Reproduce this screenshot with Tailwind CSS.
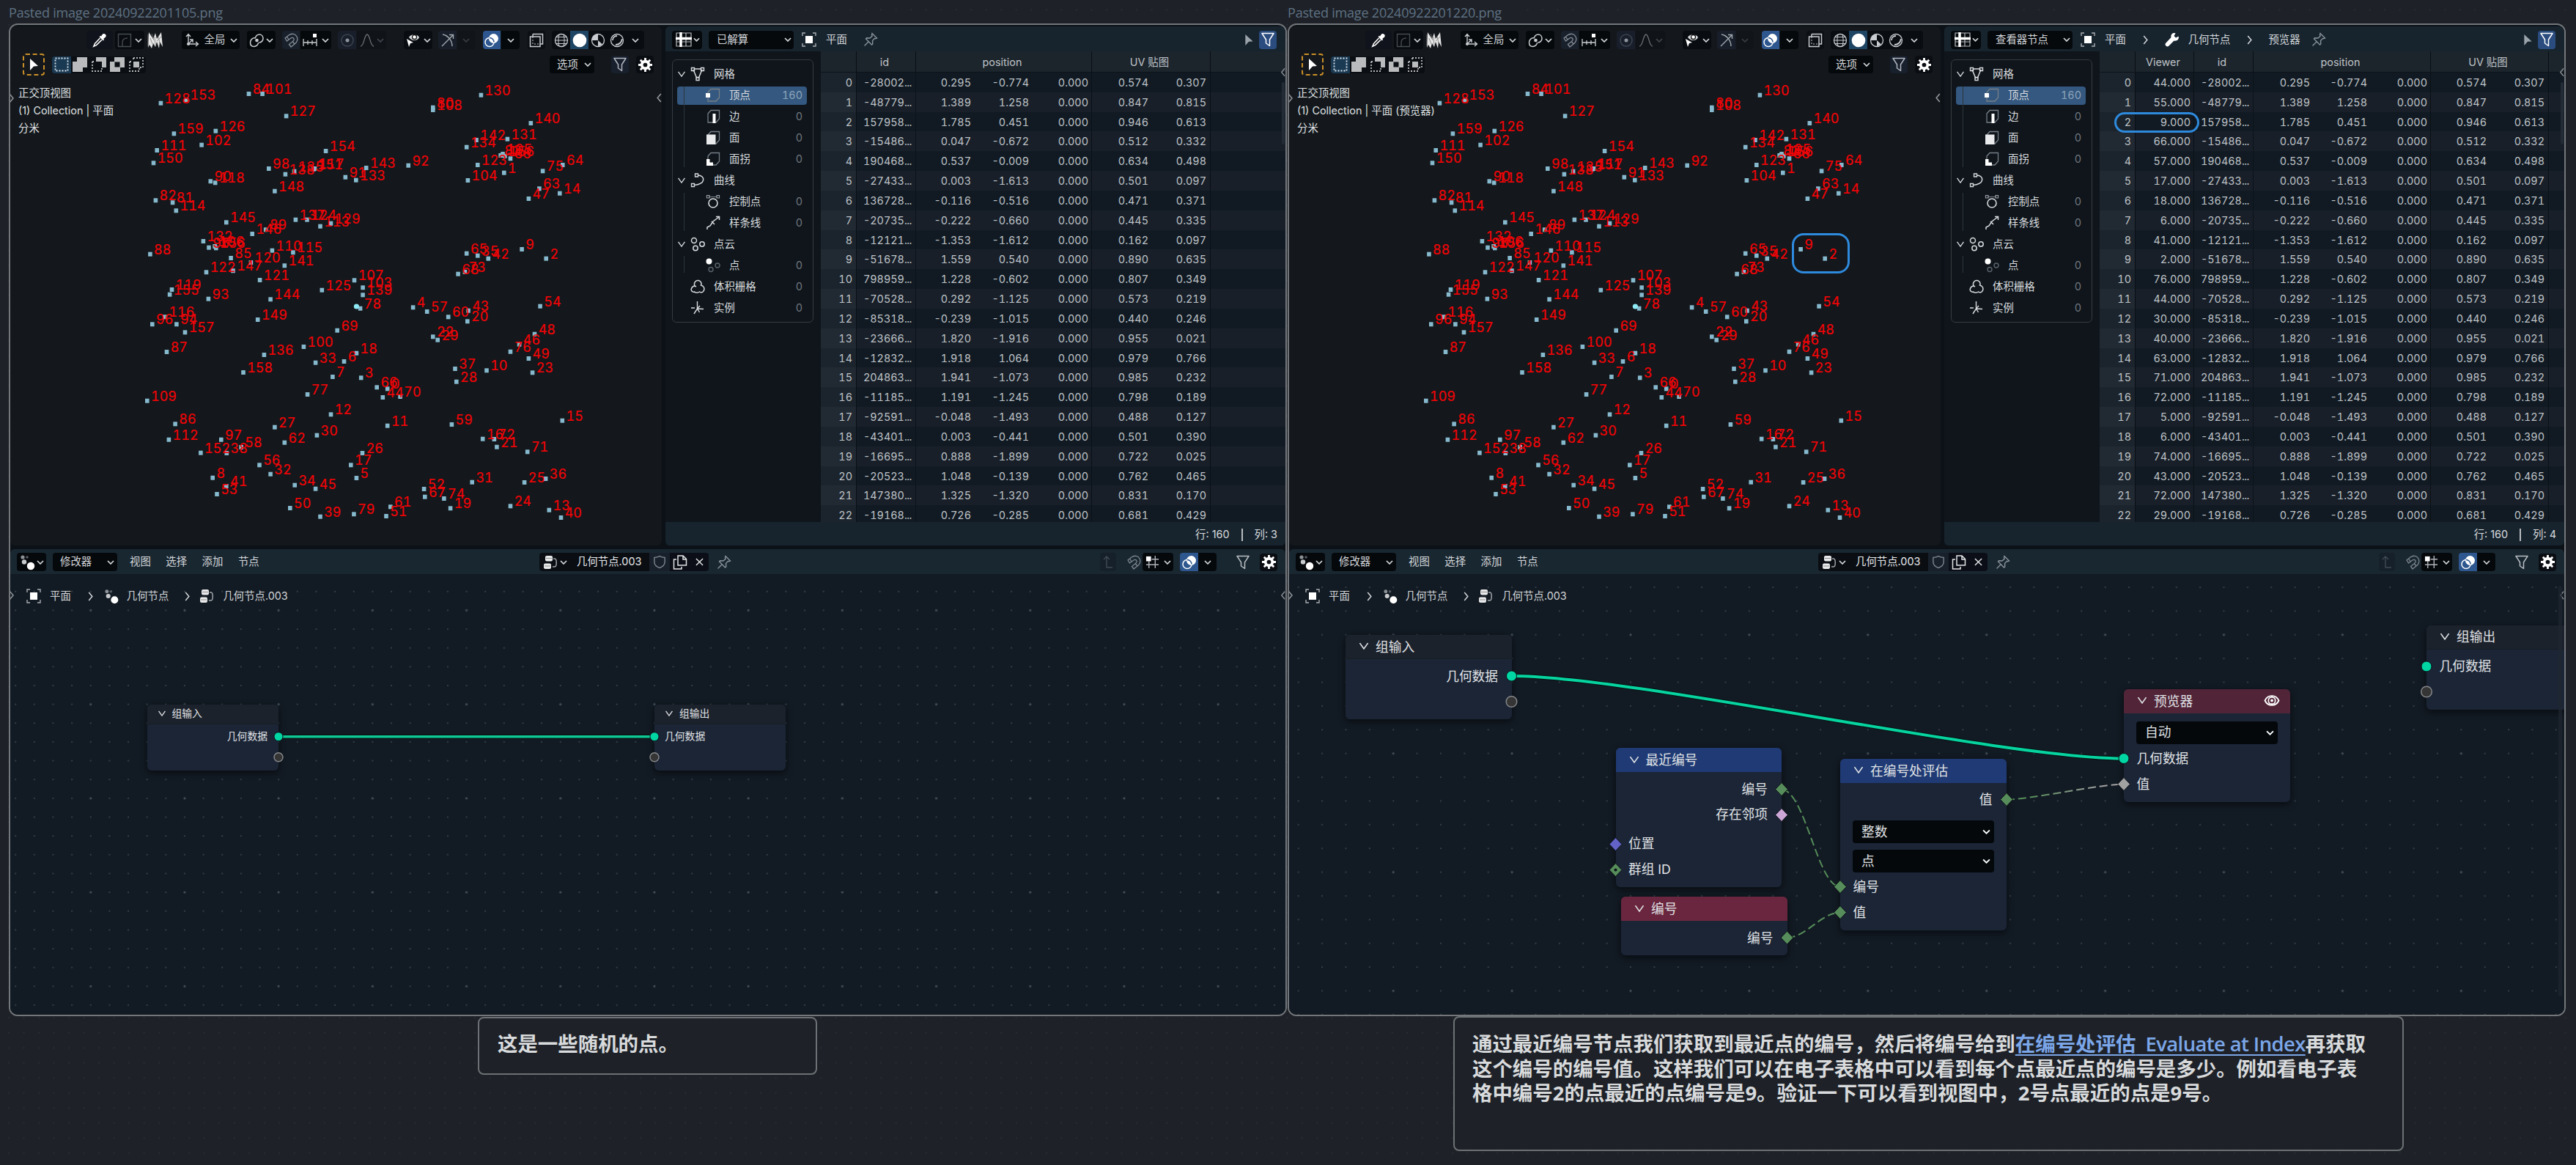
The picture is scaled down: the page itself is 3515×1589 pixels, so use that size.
<!DOCTYPE html>
<html lang="zh-CN">
<head>
<meta charset="utf-8">
<title>Canvas</title>
<script src="https://cdn.jsdelivr.net/npm/@tailwindcss/browser@4"></script>
</head>
<body class="bg-[#1e2228] w-[3515px] h-[1589px] overflow-hidden relative font-['Inter','Noto_Sans_CJK_SC',sans-serif] text-[14.4px] leading-none text-[#d4d7da] whitespace-nowrap">

<svg width="0" height="0" class="absolute">
  <defs>
    <symbol id="chev" viewBox="0 0 10 6"><path d="M1 1l4 4 4-4" fill="none" stroke="currentColor" stroke-width="1.7"/></symbol>
    <symbol id="vchev" viewBox="0 0 12 9"><path d="M1 1l5 7 5-7" fill="none" stroke="currentColor" stroke-width="1.5"/></symbol>
    <symbol id="right" viewBox="0 0 8 14"><path d="M1 1l5 6-5 6" fill="none" stroke="currentColor" stroke-width="1.6"/></symbol>
    <symbol id="left" viewBox="0 0 8 14"><path d="M7 1L2 7l5 6" fill="none" stroke="currentColor" stroke-width="1.6"/></symbol>
    <symbol id="dropper" viewBox="0 0 20 20"><path d="M18 2c-1.500-1.500-3.500-1-4.500.2L12 4.500l-1-.8-1.500 1.500 5.200 5.200 1.500-1.500-1-1 2.300-1.800c1.500-1.200 1.700-2.800.5-4.100z" fill="currentColor"/><path d="M10.500 7L3.500 14.500 1.800 18.300l3.700-1.700 7.300-7.200" fill="none" stroke="currentColor" stroke-width="1.500"/></symbol>
    <symbol id="curvebox" viewBox="0 0 20 20"><path d="M1.500 1.500h17v17h-17z M7 18v-5c0-4 2-6 7-6" fill="none" stroke="currentColor" stroke-width="1.400"/></symbol>
    <symbol id="hair" viewBox="0 0 22 22"><path d="M2 0l6 9 3-8 2 8 6-9 2 20-4-7-1 9-3-9-2 7-3-5-2 7-3-5-2 4z" fill="currentColor"/><path d="M1 3v16M4 8l3 8M10 6l1 12M15 5l2 10M19 6l-6 6M6 2l3 9" stroke="#777" stroke-width=".8"/></symbol>
    <symbol id="axes" viewBox="0 0 20 20"><path d="M5 2v13h13M2 5l3-3.500L8 5M15 12l3.500 3-3.500 3M5 15l6-6M11 13V9H7" fill="none" stroke="currentColor" stroke-width="1.400"/><circle cx="5" cy="15" r="2" fill="currentColor"/></symbol>
    <symbol id="pivot" viewBox="0 0 20 20"><path d="M8 7.500C9 4 11 2 14 2c3 0 5 2.500 5 5.500S16.500 13 13.500 13M9 6.500C5 6 1.500 9 1.500 13s2 5.500 5 5.500 6-2.500 6-5.500" fill="none" stroke="currentColor" stroke-width="1.500"/><circle cx="10.500" cy="10" r="2.300" fill="currentColor"/></symbol>
    <symbol id="magnet" viewBox="0 0 20 20"><path d="M2 7l5-4c4-3 9-2 11 2s0 8-3 10l-5 4-2.500-3.500 5-4c2-1.500 2-3 1.200-4.200S11.500 6 9.500 7.200L4.500 11z M4.500 5l2.500 4M12.500 12l2.500 3" fill="none" stroke="currentColor" stroke-width="1.300"/></symbol>
    <symbol id="snapinc" viewBox="0 0 20 20"><path d="M1 8v10M1 13h18M19 8v10M7 10v6M13 10v6" fill="none" stroke="currentColor" stroke-width="1.300"/><path d="M14 1h5v5h-5z" fill="#fff"/></symbol>
    <symbol id="propedit" viewBox="0 0 20 20"><circle cx="10" cy="10" r="8" fill="none" stroke="#3b444f" stroke-width="1.500"/><circle cx="10" cy="10" r="2.500" fill="#8d949c"/></symbol>
    <symbol id="falloff" viewBox="0 0 20 20"><path d="M1 18c5 0 5-16 9-16s4 16 9 16" fill="none" stroke="currentColor" stroke-width="1.300"/></symbol>
    <symbol id="viseye" viewBox="0 0 20 20"><path d="M2 8l9 5-4 1-2 5z" fill="currentColor"/><path d="M5 6c2-5 12-5 14 0-2 5-9 5-12 2z" fill="#d7dadd"/><circle cx="12.500" cy="5.500" r="3" fill="#fff" stroke="#111" stroke-width="1.300"/></symbol>
    <symbol id="gizmo" viewBox="0 0 20 20"><path d="M3 2c7 1 13 8 13 16M2 18L17 3M12 2.500h5.500V8" fill="none" stroke="currentColor" stroke-width="1.400"/></symbol>
    <symbol id="overlay" viewBox="0 0 20 20"><circle cx="12.500" cy="7.500" r="6.500" fill="#fff"/><circle cx="7" cy="12.500" r="6" fill="none" stroke="#fff" stroke-width="1.500"/><path d="M7 6.500a6 6 0 0 1 6 6" fill="none" stroke="#2d578e" stroke-width="1.500"/></symbol>
    <symbol id="xray" viewBox="0 0 20 20"><path d="M5 1.500h13.500V15H15M1.500 5H15v13.500H1.500zM5 5V1.500" fill="none" stroke="currentColor" stroke-width="1.500"/><path d="M5 5v10h10" fill="none" stroke="currentColor" stroke-dasharray="2 2"/></symbol>
    <symbol id="wire" viewBox="0 0 20 20"><circle cx="10" cy="10" r="8.500" fill="none" stroke="currentColor" stroke-width="1.300"/><path d="M1.500 10h17M7 2c-1.500 5-1.500 11 0 16M13 2c1.500 5 1.500 11 0 16M3 5.500h14M3 14.500h14" fill="none" stroke="currentColor" stroke-width="1"/></symbol>
    <symbol id="solid" viewBox="0 0 20 20"><circle cx="10" cy="10" r="9.300" fill="#fff"/></symbol>
    <symbol id="material" viewBox="0 0 20 20"><circle cx="10" cy="10" r="8.500" fill="none" stroke="currentColor" stroke-width="1.300"/><path d="M10 1.500a8.500 8.500 0 0 0-8.500 8.500H10zM10 10v8.500l6-3z" fill="currentColor"/></symbol>
    <symbol id="rendered" viewBox="0 0 20 20"><circle cx="10" cy="10" r="8.500" fill="none" stroke="currentColor" stroke-width="1.300"/><path d="M4 10c0-3 2-6 6-6M17 8c-1 5-4 8-9 8" fill="none" stroke="currentColor" stroke-width="1.800"/></symbol>
    <symbol id="funnel" viewBox="0 0 20 20"><path d="M2 1.500h16L12.500 10v8.500L7.500 15v-5z" fill="none" stroke="currentColor" stroke-width="1.500" stroke-linejoin="round"/></symbol>
    <symbol id="gear" viewBox="0 0 20 20"><g fill="#fff"><path d="M8.500 0h3v20h-3zM0 8.500h20v3H0z"/><path d="M8.500 0h3v20h-3zM0 8.500h20v3H0z" transform="rotate(45 10 10)"/><circle cx="10" cy="10" r="7"/></g><circle cx="10" cy="10" r="3" fill="#0a0d11"/></symbol>
    <symbol id="cursor" viewBox="0 0 12 16"><path d="M1 0l11 10-6 .5L1 16z" fill="currentColor"/></symbol>
    <symbol id="sel0" viewBox="0 0 20 20"><path d="M1.500 1.500h17v17h-17z" fill="none" stroke="#dfe8ee" stroke-width="1.800" stroke-dasharray="2 2"/></symbol>
    <symbol id="sel1" viewBox="0 0 20 20"><path d="M6 0h14v14h-6v6H0V6h6z" fill="#b9bbbd"/></symbol>
    <symbol id="sel2" viewBox="0 0 20 20"><path d="M6 0h14v14h-6V6H6z" fill="#b9bbbd"/><path d="M1 6v13h13v-4M1 6h4" fill="none" stroke="#b9bbbd" stroke-width="1.800" stroke-dasharray="2 2"/></symbol>
    <symbol id="sel3" viewBox="0 0 20 20"><path d="M6 0h14v14h-6v6H0V6h6zM6.500 6.500v7h7v-7z" fill="#b9bbbd" fill-rule="evenodd"/></symbol>
    <symbol id="sel4" viewBox="0 0 20 20"><path d="M6 6h8v8H6z" fill="#b9bbbd"/><path d="M6 1h13v13h-4M1 6v13h13v-4M1 6h4M6 1v4" fill="none" stroke="#b9bbbd" stroke-width="1.800" stroke-dasharray="2 2"/></symbol>
    <symbol id="sheet" viewBox="0 0 22 20"><path d="M1 1h20v18H1zM1 13h20M14 1v18" fill="none" stroke="#b8bcc0" stroke-width="1.200"/><path d="M7 0v20M0 8.500h22" stroke="#fff" stroke-width="3.500"/></symbol>
    <symbol id="object" viewBox="0 0 20 20"><path d="M5 5h10v10H5z" fill="#fff"/><path d="M5 1H1v4M15 1h4v4M5 19H1v-4M15 19h4v-4" fill="none" stroke="#a9adb1" stroke-width="1.400"/></symbol>
    <symbol id="pin" viewBox="0 0 20 20"><path d="M12 1.500l6.500 6.500-2 .8-1-.5-3 3.200.3 4.500-1.300 1L3.500 9l1-1.300 4.500.3 3.200-3-.7-1.500zM7.500 12.500L1.500 18.500" fill="none" stroke="currentColor" stroke-width="1.400"/></symbol>
    <symbol id="wrench" viewBox="0 0 20 20"><path d="M18.500 5.500l-3.500 2-2.500-2.500 2-3.500C11 0 7.500 3 8.500 7L1.500 14.500a2.600 2.600 0 1 0 4 4L12.500 11.500c4 1 7.500-2 6-6z" fill="#fff"/></symbol>
    <symbol id="geonodes" viewBox="0 0 22 22"><circle cx="4" cy="4" r="2.600" fill="#8d9297"/><circle cx="10" cy="4" r="1.800" fill="#565d64"/><circle cx="6" cy="10.500" r="3.200" fill="#c9cccf"/><circle cx="15" cy="16" r="5.200" fill="#fff"/></symbol>
    <symbol id="nodetree" viewBox="0 0 20 20"><rect x="3" y="1" width="10" height="7.500" rx="2" fill="#e8e9ea"/><rect x="1" y="11.500" width="10" height="7.500" rx="2" fill="#e8e9ea"/><path d="M4 4.500h8M2 15h8" stroke="#777" stroke-width=".8"/><path d="M14 5h2c3 0 3 11 0 11h-3" fill="none" stroke="#a3a8ac" stroke-width="1.500"/></symbol>
    <symbol id="shield" viewBox="0 0 18 20"><path d="M9 1.500C7 3 4 3.500 1.500 3.500V10c0 4 3.500 7 7.500 8.500 4-1.500 7.500-4.500 7.500-8.500V3.500C14 3.500 11 3 9 1.500z" fill="none" stroke="currentColor" stroke-width="1.400"/></symbol>
    <symbol id="copy" viewBox="0 0 20 20"><path d="M7 1h7l4.500 4.500V14H7zM14 1v5h4.500M5 6H1.500v13H12v-3" fill="none" stroke="#e3e5e7" stroke-width="1.500"/></symbol>
    <symbol id="x" viewBox="0 0 12 12"><path d="M1 1l10 10M11 1L1 11" stroke="#e3e5e7" stroke-width="1.500"/></symbol>
    <symbol id="up" viewBox="0 0 14 18"><path d="M1 5l4-4 4 4M5 1v15h8" fill="none" stroke="currentColor" stroke-width="1.400"/></symbol>
    <symbol id="snapgrid" viewBox="0 0 20 20"><path d="M5 9v10M14 1v18M9 6h10M1 14h18" fill="none" stroke="#aeb2b6" stroke-width="1.500"/><path d="M1 2h7v7H1z" fill="#fff"/></symbol>
    <symbol id="mesh" viewBox="0 0 20 20"><path d="M4 4l5 12M16 4l-5 12M5 3h10" fill="none" stroke="currentColor" stroke-width="1.500"/><path d="M1.500 1.500h4v4h-4zM14.500 1.500h4v4h-4zM8 14.500h4v4H8z" fill="none" stroke="currentColor" stroke-width="1.400"/></symbol>
    <symbol id="cube" viewBox="0 0 20 20"><path d="M3 6l4-4.500h11.500V13L14 18H3z" fill="none" stroke="#777f87" stroke-width="1.300"/></symbol>
    <symbol id="vert" viewBox="0 0 20 20"><use href="#cube"/><path d="M0 7h6v6H0z" fill="#fff"/></symbol>
    <symbol id="edge" viewBox="0 0 20 20"><use href="#cube"/><path d="M9.500 6h4v13h-4z" fill="#fff"/></symbol>
    <symbol id="face" viewBox="0 0 20 20"><use href="#cube"/><path d="M1 5.500h12.500V19H1z" fill="#e8eaeb"/></symbol>
    <symbol id="corner" viewBox="0 0 20 20"><use href="#cube"/><path d="M1 10h4.500v4.500H10V19H1z" fill="#fff"/></symbol>
    <symbol id="curve" viewBox="0 0 20 20"><path d="M10 3c11 0 11 13-5 13.500" fill="none" stroke="currentColor" stroke-width="1.500"/><path d="M6.500 1h4v4h-4zM1.500 14.500h4v4h-4z" fill="none" stroke="currentColor" stroke-width="1.300"/></symbol>
    <symbol id="cpoint" viewBox="0 0 20 20"><circle cx="10" cy="12" r="6" fill="none" stroke="currentColor" stroke-width="1.600"/><path d="M4 3.500h12" stroke="#777f87"/><path d="M1.500 1.500h3.500v3.500H1.500zM15 1.500h3.500v3.500H15z" fill="none" stroke="#9ba1a6" stroke-width="1.200"/></symbol>
    <symbol id="spline" viewBox="0 0 20 20"><path d="M2 19v-3l4-2 4-6 8-6M14 1.500h4.500V6M8 8l4 4" fill="none" stroke="currentColor" stroke-width="1.500"/></symbol>
    <symbol id="cloud3" viewBox="0 0 20 20"><g fill="none" stroke="currentColor" stroke-width="1.500"><circle cx="5" cy="5" r="3.500"/><circle cx="7" cy="15.500" r="3.200"/><circle cx="16" cy="10" r="3.200"/></g></symbol>
    <symbol id="pt" viewBox="0 0 20 20"><circle cx="4.500" cy="4.500" r="4" fill="#fff"/><g fill="none" stroke="#5b636b" stroke-width="1.400"><circle cx="7" cy="15.500" r="3"/><circle cx="16" cy="10" r="3"/></g></symbol>
    <symbol id="volume" viewBox="0 0 20 20"><path d="M6 9C4 4 8 1 11 1.500S16 5 14.500 8c4 1 5 4 4 7s-4 3.500-6 2c-3 2-6 1-7 0-3 1-5-2-4-4.500S5 9 6 9zM6 9l2 1" fill="none" stroke="currentColor" stroke-width="1.500"/></symbol>
    <symbol id="inst" viewBox="0 0 20 20"><path d="M9.500 1v10l8.500.5M9.500 11L5 18M1 10h5M13 7l-3.500 4 3 5" fill="none" stroke="currentColor" stroke-width="1.400"/></symbol>
    <symbol id="eye" viewBox="0 0 22 18"><path d="M1 9c4-9 16-9 20 0-4 9-16 9-20 0z" fill="none" stroke="#fff" stroke-width="2"/><circle cx="11" cy="9" r="5" fill="none" stroke="#fff" stroke-width="1.800"/><circle cx="11" cy="9" r="2" fill="#fff"/></symbol>
    <pattern id="pagegrid" x="7" y="3" width="20.520" height="20.520" patternUnits="userSpaceOnUse"><circle cx="5" cy="10.300" r=".9" fill="#2b3137"/></pattern>
  </defs>
</svg>

<svg class="absolute inset-0" width="3515" height="1589"><rect width="3515" height="1589" fill="url(#pagegrid)"/></svg>

<main class="relative flex flex-col w-[3515px] pl-3">
  <div class="flex h-8 pt-[5px] font-['Open_Sans','Noto_Sans',sans-serif] text-[18px] tracking-[-0.2px] leading-[24px] text-[#5f7183] gap-px">
    <div class="w-[1744px]"><span class="inline-block bg-[#1e2228] pr-4">Pasted image 20240922201105.png</span></div>
    <div class="w-[1744px]"><span class="inline-block bg-[#1e2228] pr-4">Pasted image 20240922201220.png</span></div>
  </div>
  <div id="panels" class="flex gap-px"></div>
  <div class="flex items-start font-['Open_Sans','Noto_Sans_CJK_SC',sans-serif] font-bold text-[27.450px] leading-[33.600px] text-[#d8dadc]">
    <div class="mt-px ml-[640px] w-[463px] h-[79px] rounded-lg border-2 border-[#6c7175] bg-[#1e2228] pl-[25px] pt-[18px]">这是一些随机的点。</div>
    <div class="ml-[868px] w-[1297px] h-[184px] rounded-lg border-2 border-[#6c7175] bg-[#1e2228] pl-[24px] pt-[19px]">
      <p>通过最近编号节点我们获取到最近点的编号，然后将编号给到<span class="text-[#7ba6e8] underline decoration-2 underline-offset-4">在编号处评估<span class="whitespace-pre font-semibold tracking-[-0.6px]">  Evaluate at Index</span></span>再获取</p>
      <p>这个编号的编号值。这样我们可以在电子表格中可以看到每个点最近点的编号是多少。例如看电子表</p>
      <p>格中编号2的点最近的点编号是9。验证一下可以看到视图中，2号点最近的点是9号。</p>
    </div>
  </div>
</main>

<script>
const ic = (id, cls) => `<svg class="${cls || 'size-5 shrink-0'}"><use href="#${id}"/></svg>`;
const chev = (cls) => ic('chev', cls || 'w-[10px] h-[6px] shrink-0 text-[#d4d7da]');

/* Vertex labels: [number, x, y] in viewport space */
const upper = [[128,378,422],[153,438,409],[84,585,384],[101,617,384],[130,1131,389],[80,1018,440],[108,1018,450],[127,673,475],[140,1248,504],[159,409,547],[126,507,536],[102,474,593],[111,369,615],[150,361,667],[154,766,618],[142,1120,573],[131,1193,569],[134,1097,602],[83,1177,636],[105,1182,630],[156,1187,638],[66,1200,649],[123,1123,675],[1,1185,707],[104,1100,738],[64,1323,675],[75,1276,700],[63,1268,772],[14,1316,791],[47,1243,813],[98,632,690],[138,671,713],[135,692,701],[151,737,692],[117,740,690],[143,861,687],[92,960,677],[91,812,725],[133,837,737],[90,495,742],[118,506,748],[148,646,782],[82,366,820],[81,406,829],[114,414,862],[145,532,910],[137,695,899],[124,722,899],[113,753,926],[129,778,914],[89,625,940],[146,593,957],[132,478,987],[95,491,1013],[106,505,1008],[156,508,1015],[88,353,1040],[85,543,1056],[110,640,1025],[115,689,1033],[120,590,1074],[141,669,1087],[122,485,1114],[147,548,1108],[121,611,1146],[107,833,1147],[125,757,1187],[65,1097,1037],[35,1123,1046],[42,1148,1058],[9,1227,1020],[2,1284,1058],[68,1077,1121],[73,1093,1113],[103,853,1177],[119,404,1185]];
const lower = [[155,399,65],[139,853,67],[78,847,122],[93,490,83],[144,636,85],[4,971,118],[57,1004,135],[60,1054,157],[43,1101,131],[20,1099,175],[54,1270,113],[116,388,157],[96,358,187],[94,415,187],[157,435,220],[149,606,168],[69,793,212],[48,1257,227],[22,1018,238],[29,1029,251],[46,1221,269],[76,1200,299],[100,714,279],[18,838,305],[87,392,300],[136,621,312],[33,742,344],[6,809,339],[49,1243,327],[158,572,384],[7,782,402],[3,849,406],[37,1070,369],[10,1144,376],[28,1073,422],[23,1252,385],[66,886,445],[0,911,451],[44,900,486],[70,941,483],[77,723,474],[109,346,500],[12,778,556],[15,1322,581],[86,412,595],[27,646,608],[11,911,602],[59,1062,597],[112,397,659],[97,520,659],[30,745,641],[62,669,671],[16,1135,656],[72,1162,657],[152,472,713],[38,533,714],[58,567,690],[26,852,714],[21,1168,689],[71,1240,709],[17,825,763],[56,610,763],[32,636,800],[8,500,815],[5,838,816],[31,1110,833],[25,1233,834],[36,1283,819],[41,532,849],[53,510,882],[34,693,845],[45,742,860],[52,997,861],[67,999,893],[74,1044,900],[50,682,939],[19,1059,940],[24,1200,931],[61,918,934],[13,1291,947],[39,753,974],[79,832,964],[51,908,972],[40,1319,978]];
const pts = upper.map(([n, x, y]) => [n, x / 1.723, y / 3]).concat(lower.map(([n, x, y]) => [n, x / 1.723, 380 + y / 3]));
const points = () => `<svg class="absolute inset-0" width="889" height="708" viewBox="14 36 889 708">
  <g fill="#86b9cd">${pts.map(([n, x, y]) => `<rect x="${(x - 2.8).toFixed(1)}" y="${(y - 3).toFixed(1)}" width="5.600" height="6"/>`).join('')}</g>
  <circle cx="486.400" cy="418" r="3.600" fill="#8deaf5"/>
  <g class="tabular-nums text-[18px]" fill="#f20407" stroke="#f20407" stroke-width=".2">${pts.map(([n, x, y]) => `<text x="${(x + 5.2).toFixed(1)}" y="${(y - .2).toFixed(1)}">${n}</text>`).join('')}</g></svg>`;

const viewport = (p) => `<section class="relative w-[889px] h-[708px] bg-[#14171b] rounded-md overflow-hidden">
  ${points()}
  <div class="relative flex items-center pt-[6px] h-[31px] pl-[104px] text-[#c9cdd1]">
    <div class="w-9 h-[25px] rounded bg-[#10131b] flex items-center justify-center text-white">${ic('dropper', 'size-5')}</div>
    <div class="ml-[3px] w-10 h-[25px] rounded bg-[#090c10] flex items-center justify-between pl-[3px] pr-[3px] text-[#454b52]">${ic('curvebox')}${chev()}</div>
    <div class="ml-1 w-[22px] h-[22px] text-[#e6e6e6]">${ic('hair', 'size-[22px]')}</div>
    <div class="ml-[25px] w-[79px] h-[25px] rounded bg-[#06090c] flex items-center justify-between pl-1 pr-[3px]">${ic('axes')}<span>全局</span>${chev()}</div>
    <div class="ml-[10px] w-[39px] h-[25px] rounded bg-[#06090c] flex items-center justify-between pl-[3px] pr-[3px]">${ic('pivot')}${chev()}</div>
    <div class="ml-[9px] w-6 h-[25px] rounded-l bg-[#18202c] flex items-center justify-center text-[#868d95]">${ic('magnet')}</div>
    <div class="ml-px w-[42px] h-[25px] rounded-r bg-[#06090c] flex items-center justify-between pl-[3px] pr-[3px]">${ic('snapinc')}${chev()}</div>
    <div class="ml-[9px] w-[25px] h-[25px] rounded-l bg-[#181f2b] flex items-center justify-center">${ic('propedit')}</div>
    <div class="ml-px w-10 h-[25px] rounded-r bg-[#101318] flex items-center justify-between pl-1 pr-[3px] text-[#6c7279]">${ic('falloff')}${chev('w-[10px] h-[6px] text-[#42484f]')}</div>
    <div class="ml-6 w-[39px] h-[25px] rounded bg-[#090c10] flex items-center justify-between pl-[2px] pr-[2px] text-white">${ic('viseye')}${chev()}</div>
    <div class="ml-2 w-[25px] h-[25px] rounded-l bg-[#181f2b] flex items-center justify-center text-[#a4aab0]">${ic('gizmo')}</div>
    <div class="ml-px w-6 h-[25px] rounded-r bg-[#111419] flex items-center justify-center">${chev('w-[10px] h-[6px] text-[#383e45]')}</div>
    <div class="ml-[11px] w-6 h-[25px] rounded-l bg-[#2d578e] flex items-center justify-center">${ic('overlay')}</div>
    <div class="ml-px w-[25px] h-[25px] rounded-r bg-[#06090c] flex items-center justify-center">${chev()}</div>
    <div class="ml-[11px] w-6 h-[25px] rounded bg-[#0c0f13] flex items-center justify-center">${ic('xray')}</div>
    <div class="ml-[9px] w-[126px] h-[25px] rounded bg-[#090c10] flex items-center">
      <span class="w-[25px] flex justify-center">${ic('wire')}</span><span class="w-[25px] h-full bg-[#1f4564] flex items-center justify-center">${ic('solid')}</span><span class="w-[26px] flex justify-center">${ic('material')}</span><span class="w-[25px] flex justify-center">${ic('rendered')}</span><span class="w-[25px] flex justify-center">${chev()}</span>
    </div>
  </div>
  <div class="relative flex items-center pt-[6px] h-[36px] pl-[17px]">
    <div class="w-[30px] h-[30px] rounded border-2 border-dashed border-[#c98f28] flex items-center justify-center text-white">${ic('cursor', 'w-[12px] h-[16px]')}</div>
    <div class="ml-[10px] flex h-[23px]">
      <span class="w-[25.500px] bg-[#1a3a54] rounded-l flex items-center justify-center">${ic('sel0')}</span>
      <span class="w-[25.500px] bg-[#0b0e12] flex items-center justify-center">${ic('sel1')}</span>
      <span class="w-[25.500px] bg-[#0b0e12] flex items-center justify-center">${ic('sel2')}</span>
      <span class="w-[25.500px] bg-[#0b0e12] flex items-center justify-center">${ic('sel3')}</span>
      <span class="w-[25.500px] bg-[#0b0e12] rounded-r flex items-center justify-center">${ic('sel4')}</span>
    </div>
    <div class="ml-[551.500px] w-[61px] h-[24px] rounded bg-[#06090c] flex items-center justify-between pl-[10px] pr-[4px]"><span>选项</span>${chev()}</div>
    <div class="ml-[23px] w-6 h-6 rounded bg-[#181f2d] flex items-center justify-center text-[#b3b8c0]">${ic('funnel')}</div>
    <div class="ml-[10px] w-6 h-6 rounded bg-[#0a0d11] flex items-center justify-center">${ic('gear', 'size-[19px]')}</div>
  </div>
  <div class="relative pl-[11px] pt-[12px] leading-[23.800px] text-[#dfe1e3]"><p>正交顶视图</p><p>(1) Collection | ${p.obj}</p><p>分米</p></div>
  <span class="absolute left-[-2px] top-[91px] text-[#8b9095]">${ic('right', 'w-[8px] h-[14px]')}</span>
  <span class="absolute right-0 top-[91px] text-[#9a9fa4]">${ic('left', 'w-[8px] h-[13px]')}</span>
</section>`;

const parent = (icon, name, open, count) => `<div class="h-[28.940px] flex items-center pl-[6px] pr-[14px]"><span class="w-[12px] mr-[6px] flex">${open ? ic('vchev', 'w-[12px] h-[8px]') : ''}</span>${ic(icon, 'size-5 shrink-0')}<span class="ml-[12px]">${name}</span><span class="ml-auto text-[#6f767d] tabular-nums">${count ?? ''}</span></div>`;
const child = (icon, name, count, on) => `<div class="h-[28.940px] flex items-center"><div class="h-[25px] w-full rounded flex items-center pl-[39px] pr-[6px] ${on ? 'bg-[#34587f]' : ''}">${ic(icon, 'size-5 shrink-0')}<span class="ml-[12px]">${name}</span><span class="ml-auto tabular-nums ${on ? 'text-[#8ea4ba]' : 'text-[#6f767d]'}">${count}</span></div></div>`;
const kids = (html) => `<div class="relative pl-[6px] pr-[8px] before:absolute before:left-[15px] before:top-0.5 before:bottom-1 before:w-px before:bg-[#2d353c]">${html}</div>`;
const tree = () => `<div class="w-[212px] bg-[#0f151b] pl-[9px] pt-[11px]"><div class="w-[193px] h-[359px] rounded-md border border-[#363b40] pt-[5px] text-[#d9dcdf]">
  ${parent('mesh', '网格', 1)}${kids(child('vert', '顶点', 160, 1) + child('edge', '边', 0) + child('face', '面', 0) + child('corner', '面拐', 0))}
  ${parent('curve', '曲线', 1)}${kids(child('cpoint', '控制点', 0) + child('spline', '样条线', 0))}
  ${parent('cloud3', '点云', 1)}${kids(child('pt', '点', 0))}
  ${parent('volume', '体积栅格', 0, 0)}${parent('inst', '实例', 0, 0)}
</div></div>`;

const rows = `44 -28002 0.295 -0.774 0.574 0.307
55 -48779 1.389 1.258 0.847 0.815
9 157958 1.785 0.451 0.946 0.613
66 -15486 0.047 -0.672 0.512 0.332
57 190468 0.537 -0.009 0.634 0.498
17 -27433 0.003 -1.613 0.501 0.097
18 136728 -0.116 -0.516 0.471 0.371
6 -20735 -0.222 -0.660 0.445 0.335
41 -12121 -1.353 -1.612 0.162 0.097
2 -51678 1.559 0.540 0.890 0.635
76 798959 1.228 -0.602 0.807 0.349
44 -70528 0.292 -1.125 0.573 0.219
30 -85318 -0.239 -1.015 0.440 0.246
40 -23666 1.820 -1.916 0.955 0.021
63 -12832 1.918 1.064 0.979 0.766
71 204863 1.941 -1.073 0.985 0.232
72 -11185 1.191 -1.245 0.798 0.189
5 -92591 -0.048 -1.493 0.488 0.127
6 -43401 0.003 -0.441 0.501 0.390
74 -16695 0.888 -1.899 0.722 0.025
43 -20523 1.048 -0.139 0.762 0.465
72 147380 1.325 -1.320 0.831 0.170
29 -19168 0.726 -0.285 0.681 0.429`.split('\n').map(r => r.split(' '));

const sheetRow = (p, r, i) => `<div class="h-[26.830px] shrink-0 grid ${p.grid} items-stretch text-right leading-[28px] ${i % 2 ? 'bg-[#181f29]' : 'bg-[#111a23]'}">
  <span class="pr-[5px] border-r border-[#0a0f14] ${i % 2 ? 'bg-[#212932]' : 'bg-[#1b242d]'}">${i}</span>
  ${p.viewer ? `<span class="pr-[4px] border-r border-[#0a0f14]">${r[0]}.000</span>` : ''}
  <span class="pr-[5px] border-r border-[#0c1218]">${r[1]}<span class="tracking-[-0.5px]">...</span></span><span class="pr-[5px]">${r[2]}</span><span class="pr-[5px]">${r[3]}</span><span class="pr-[4px] border-r border-[#0a0f14]">0.000</span><span class="pr-[5px]">${r[4]}</span><span class="pr-[5px] border-r border-[#0a0f14]">${r[5]}</span></div>`;

const sheet = (p) => `<section class="relative w-[846px] h-[708px] rounded-md overflow-hidden bg-[#162029] flex flex-col">
  <div class="h-[34px] shrink-0 bg-[#17242e] flex items-center pt-[2px] pl-[9px]">
    <div class="w-[41px] h-[25px] rounded bg-[#06090c] flex items-center justify-between pl-[5px] pr-[3px]">${ic('sheet', 'w-[22px] h-5')}${chev('w-[9px] h-[6px]')}</div>
    <div class="ml-[9px] w-[116px] h-[25px] rounded bg-[#06090c] flex items-center justify-between pl-[11px] pr-[3px]"><span>${p.mode}</span>${chev()}</div>
    <span class="ml-[11px]">${ic('object')}</span><span class="ml-[13px]">平面</span>
    ${p.viewer ? `<span class="ml-[23px]">${ic('right', 'w-[8px] h-[13px]')}</span><span class="ml-[22px]">${ic('wrench')}</span><span class="ml-[12px]">几何节点</span><span class="ml-[23px]">${ic('right', 'w-[8px] h-[13px]')}</span><span class="ml-[21px]">预览器</span><span class="ml-[15px] text-[#89929a]">${ic('pin')}</span>` : `<span class="ml-[22px] text-[#89929a]">${ic('pin')}</span>`}
    <span class="ml-auto text-[#9aa3aa]">${ic('cursor', 'w-[14px] h-[15px]')}</span>
    <span class="ml-[7px] mr-[12px] w-6 h-[25px] rounded bg-[#2a4c7f] flex items-center justify-center text-white">${ic('funnel')}</span>
  </div>
  <div class="flex h-[642px] shrink-0">
    ${tree()}
    <div class="relative w-[634px] overflow-hidden flex flex-col tabular-nums text-[#bfc3c7]">
      <div class="h-[29px] shrink-0 flex bg-[#1c242c] border-b border-[#0d1318] text-center leading-[30px] text-[14.4px]">
        <span class="w-[49px] border-r border-[#0a0f14]"></span>
        ${p.viewer ? `<span class="w-20 border-r border-[#0a0f14] pr-1">Viewer</span><span class="w-[81px] border-r border-[#0a0f14] pr-1">id</span><span class="w-[242px] border-r border-[#0a0f14] pr-1">position</span><span class="w-[161px] border-r border-[#0a0f14] pr-1">UV 贴图</span>` : `<span class="w-[81px] border-r border-[#0a0f14] pr-1">id</span><span class="w-[240px] border-r border-[#0a0f14] pr-1">position</span><span class="w-[162px] border-r border-[#0a0f14] pr-1">UV 贴图</span>`}
      </div>
      ${rows.map((r, i) => sheetRow(p, r, i)).join('')}
      <span class="absolute right-[1px] top-[42px] w-[4px] h-[85px] rounded bg-[#232c36]"></span>
      <span class="absolute right-0 top-[22px] text-[#8b9095]">${ic('left', 'w-[7px] h-[13px]')}</span>
    </div>
  </div>
  <div class="grow bg-[#17242e] flex items-center justify-end pr-[11px] pt-[3px] text-[#d9dcdf]"><span>行: 160</span><span class="mx-[16px] w-[2px] h-[17px] bg-[#b9bcbf]"></span><span>列: ${p.cols}</span></div>
</section>`;

const nodeHeader = () => `<div class="mt-[5px] h-[34px] bg-[#192731] rounded-t-md flex items-center pl-[9px] pt-px">
  <div class="w-10 h-[25px] rounded bg-[#06090c] flex items-center justify-between pl-[4px] pr-[3px]">${ic('geonodes', 'size-[22px]')}${chev()}</div>
  <div class="ml-[9px] w-[88px] h-[25px] rounded bg-[#06090c] flex items-center justify-between pl-[10px] pr-[4px]"><span>修改器</span>${chev()}</div>
  <div class="ml-[17px] flex gap-[20.500px]"><span>视图</span><span>选择</span><span>添加</span><span>节点</span></div>
  <div class="ml-auto w-[150px] h-[25px] rounded-l bg-[#0a0e13] flex items-center pl-[5px]">${ic('nodetree')}${chev('ml-[3px] w-[10px] h-[6px]')}<span class="ml-[13px] text-[#e8eaec]">几何节点.003</span></div>
  <div class="w-[28px] h-[25px] bg-[#17202b] flex items-center justify-center text-[#848c95]">${ic('shield', 'w-[18px] h-[19px]')}</div>
  <div class="w-[53px] h-[25px] rounded-r bg-[#0b0e16] flex items-center justify-between pl-[4px] pr-[7px]">${ic('copy')}${ic('x', 'size-[11px]')}</div>
  <span class="ml-[11px] mr-[503px] text-[#89929a]">${ic('pin')}</span>
  <span class="w-[22px] h-[25px] rounded bg-[#15202a] flex items-center justify-center text-[#3f4a54]">${ic('up', 'w-[14px] h-[18px]')}</span>
  <span class="ml-[14px] text-[#7d858d]">${ic('magnet')}</span>
  <div class="ml-[2px] w-[42px] h-[25px] rounded bg-[#06090c] flex items-center justify-between pl-[4px] pr-[3px]">${ic('snapgrid', 'size-[19px]')}${chev()}</div>
  <div class="ml-[9px] w-[25px] h-[25px] rounded-l bg-[#2d578e] flex items-center justify-center">${ic('overlay')}</div>
  <div class="w-[25px] h-[25px] rounded-r bg-[#06090c] flex items-center justify-center">${chev()}</div>
  <span class="ml-[26px] text-[#b9bec3]">${ic('funnel')}</span>
  <span class="ml-[13px] mr-[11px] w-6 h-6 rounded bg-[#0a0d11] flex items-center justify-center">${ic('gear', 'size-[19px]')}</span>
</div>`;

/* Nodes come in two sizes: the editor on the right is zoomed in further (l = 1) */
const out = (t, l) => `<div class="flex items-center justify-end ${l ? 'h-[34.800px] pr-[19px]' : 'h-7 pr-[15px]'}">${t}</div>`;
const inp = (t, l) => `<div class="flex items-center ${l ? 'h-[34.800px] pl-[17.500px]' : 'h-7 pl-[14px]'}">${t}</div>`;
const sel = (t, cls) => `<div class="mx-[17px] h-[31px] rounded bg-[#04080b] flex items-center justify-between pl-[12px] pr-[5px] ${cls}"><span>${t}</span>${chev('w-[11px] h-[7px] text-white')}</div>`;
const node = (o, x, y, w, h, l, title, head, body, eye) => `<div class="absolute rounded-md overflow-hidden bg-[#1b2536] shadow-[0_3px_10px_rgba(0,0,0,0.55)] text-[#e0e3e6] ${l ? 'text-[17.700px]' : 'text-[13.800px]'}" style="left:${x - o}px;top:${y - 783}px;width:${w}px;height:${h}px">
  <div class="flex items-center ${l ? 'h-[33px] pl-[18px] pt-px' : 'h-[27px] pl-[14px]'} ${head}">${ic('vchev', l ? 'w-[14px] h-[10px] mb-[3px]' : 'w-[12px] h-[8px] mb-[2px]')}<span class="${l ? 'ml-[9px]' : 'ml-[8px]'}">${title}</span>${eye ? `<span class="ml-auto mr-[14px]">${ic('eye', 'w-[22px] h-[17px] mb-[3px]')}</span>` : ''}</div>
  <div class="${l ? 'pt-[6px]' : 'pt-[3px]'}">${body}</div></div>`;

const dot = (x, y, c, r) => `<circle cx="${x}" cy="${y}" r="${r}" fill="${c}" stroke="#0c1118"/>`;
const grey = (x, y, r) => `<circle cx="${x}" cy="${y}" r="${r}" fill="#343534" stroke="#85878a" stroke-width="1.500"/>`;
const dia = (x, y, c) => `<path d="M${x} ${y - 9}L${x + 8.500} ${y}L${x} ${y + 9}L${x - 8.500} ${y}z" fill="${c}" stroke="#0c1118"/>`;
const grid = (id, ox, px, x0, y0) => `<svg class="absolute inset-0" width="1740" height="601" viewBox="${ox} 783 1740 601"><defs><pattern id="${id}" x="${x0 - 2}" y="${y0 - 2}" width="${px}" height="${px}" patternUnits="userSpaceOnUse"><circle cx="2" cy="2" r="1.100" fill="#36424b"/></pattern><pattern id="${id}b" x="${x0 - 2 + px * 4}" y="${y0 - 2 + px * (id === 'ga' ? 1 : 2)}" width="${px * 5}" height="${px * 5}" patternUnits="userSpaceOnUse"><circle cx="2" cy="2" r="1.600" fill="#414e58"/></pattern></defs><rect x="${ox}" y="798" width="1740" height="586" fill="url(#${id})"/><rect x="${ox}" y="798" width="1740" height="586" fill="url(#${id}b)"/></svg>`;
const crumbs = () => `<div class="relative flex items-center h-[60px] pl-[22px]">${ic('object')}<span class="ml-[12px]">平面</span><span class="ml-[23px]">${ic('right', 'w-[8px] h-[13px]')}</span><span class="ml-[14px]">${ic('geonodes', 'size-[21px]')}</span><span class="ml-[10px]">几何节点</span><span class="ml-[22px]">${ic('right', 'w-[8px] h-[13px]')}</span><span class="ml-[12px]">${ic('nodetree')}</span><span class="ml-[12px]">几何节点.003</span></div>
  <span class="absolute left-[-2px] top-[22px] text-[#8b9095]">${ic('right', 'w-[8px] h-[14px]')}</span><span class="absolute right-0 top-[22px] text-[#8b9095]">${ic('left', 'w-[7px] h-[14px]')}</span>`;

const G = '#00d6a3', I = '#568d5a', plain = 'bg-[#1c222c] border-b border-[#161c24]';
const canvasA = grid('ga', 14, 25.64, 21.2, 806.8) + crumbs() +
  node(14, 200.5, 961, 179.5, 90, 0, '组输入', plain, out('几何数据', 0)) +
  node(14, 893, 961, 179, 90, 0, '组输出', plain, inp('几何数据', 0)) +
  `<svg class="absolute inset-0" width="1740" height="601" viewBox="14 783 1740 601"><path d="M380 1004.700H893" stroke="#04120f" stroke-width="5.500"/><path d="M380 1004.700H893" stroke="#0fc795" stroke-width="3.400"/>${dot(380, 1004.7, G, 6)}${dot(893, 1004.7, G, 6)}${grey(380, 1032.7, 6)}${grey(893, 1032.7, 6)}</svg>`;
const O = 1759;
const canvasB = grid('gb', O, 32.38, 1771.7, 801) + crumbs() +
  node(O, 1836, 866, 227, 115, 1, '组输入', plain, out('几何数据', 1)) +
  node(O, 3311, 852.5, 227, 115, 1, '组输出', plain, inp('几何数据', 1)) +
  node(O, 2204.5, 1020, 226.5, 190, 1, '最近编号', 'bg-[#1f3a74]', out('编号', 1) + out('存在邻项', 1) + '<div class="h-[5px]"></div>' + inp('位置', 1) + inp('群组 ID', 1)) +
  node(O, 2212, 1223, 226.5, 80, 1, '编号', 'bg-[#6a263e]', out('编号', 1)) +
  node(O, 2511, 1034.5, 226.500, 234, 1, '在编号处评估', 'bg-[#1f3a74]', out('值', 1) + sel('整数', 'mt-[11px]') + sel('点', 'mt-[9px] mb-[2px]') + inp('编号', 1) + inp('值', 1)) +
  node(O, 2898, 939.5, 226.500, 154, 1, '预览器', 'bg-[#512438]', sel('自动', 'mt-[5px] mb-[3px]') + inp('几何数据', 1) + inp('值', 1), 1) +
  `<svg class="absolute inset-0" width="1740" height="601" viewBox="${O} 783 1740 601" fill="none">
    <defs><linearGradient id="lg" x1="2738" x2="2898" y1="0" y2="0" gradientUnits="userSpaceOnUse"><stop offset=".2" stop-color="#568d5a"/><stop offset=".8" stop-color="#a1a1a1"/></linearGradient></defs>
    <path d="M2062.500 922C2230 922 2730 1034.500 2898 1034.500" stroke="#04120f" stroke-width="6"/><path d="M2062.500 922C2230 922 2730 1034.500 2898 1034.500" stroke="#07d3a0" stroke-width="4"/>
    <path d="M2431 1077C2463 1077 2480 1209.500 2511 1209.500M2438.500 1279C2464 1279 2485 1244.500 2511 1244.500" stroke="#568d5a" stroke-width="2" stroke-dasharray="11 5"/>
    <path d="M2738 1090.500C2770 1090.500 2866 1069.500 2898 1069.500" stroke="url(#lg)" stroke-width="2" stroke-dasharray="11 5"/>
    ${dot(2062.5, 922, G, 7)}${grey(2062.5, 957, 7.3)}${dot(3311, 909, G, 7)}${grey(3311, 943.5, 7.3)}${dot(2898, 1034.5, G, 7)}
    ${dia(2898, 1069.5, '#a1a1a1')}${dia(2431, 1076.5, I)}${dia(2431, 1111.5, '#cca6d6')}${dia(2204.5, 1151.5, '#6363c7')}${dia(2204.5, 1186.5, I)}${dia(2438.5, 1279, I)}${dia(2738, 1090.5, I)}${dia(2511, 1209.5, I)}${dia(2511, 1244.5, I)}
    <circle cx="2204.500" cy="1186.500" r="2" fill="#0c1118"/></svg>
  <span class="absolute right-[3px] top-[16px] bottom-[25px] w-[5px] rounded bg-[#1f2731]/70"></span>`;

const panel = (p) => `<div class="relative w-[1744px] h-[1354px] rounded-xl border-2 border-[#73777b] overflow-hidden bg-[#0b1117]">
  <div class="flex gap-[5px] pt-[2px]">${viewport(p)}${sheet(p)}</div>
  ${nodeHeader()}
  <div class="relative h-[601px] bg-[#121a23] overflow-hidden">${p.canvas}</div>
  ${p.viewer ? '<span class="absolute left-[686px] top-[284px] w-[79px] h-[55px] rounded-[16px] border-3 border-[#2e8add]"></span><span class="absolute left-[1126px] top-[119px] w-[116px] h-[28px] rounded-full border-3 border-[#2e8add]"></span>' : ''}
</div>`;

document.getElementById('panels').innerHTML =
  panel({ obj: '平面', mode: '已解算', cols: 3, canvas: canvasA, grid: 'grid-cols-[49px_81px_80px_79px_81px_82px_80px_102px]' }) +
  panel({ obj: '平面 (预览器)', mode: '查看器节点', cols: 4, viewer: 1, canvas: canvasB, grid: 'grid-cols-[49px_80px_81px_82px_78px_82px_81px_80px_21px]' });
</script>
</body>
</html>
